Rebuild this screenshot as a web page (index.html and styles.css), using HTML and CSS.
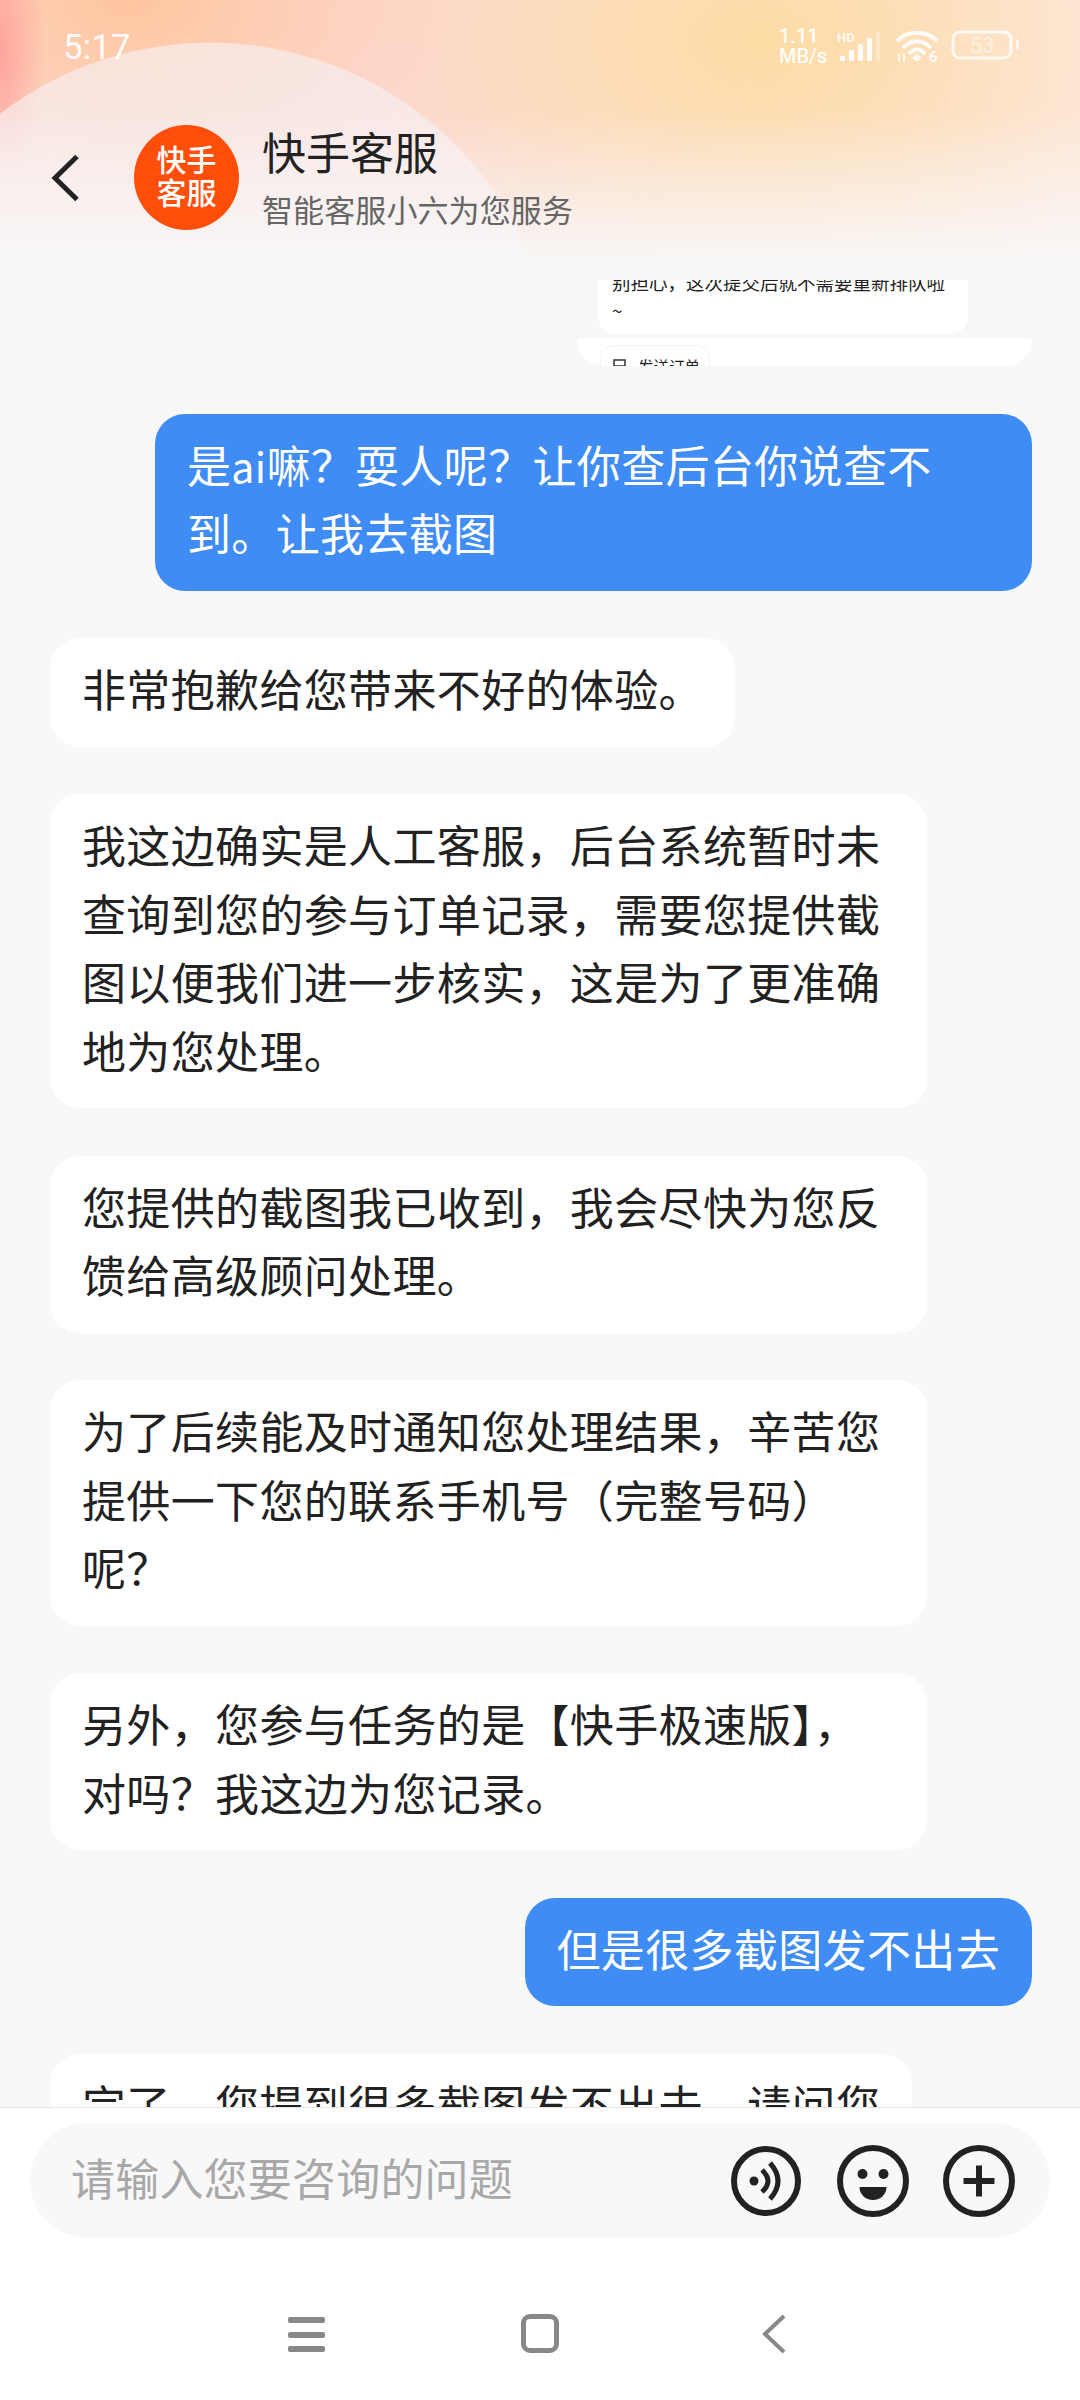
FILE: index.html
```html
<!DOCTYPE html>
<html lang="zh-CN">

<head>
    <meta charset="UTF-8">
    <meta name="viewport" content="width=device-width, initial-scale=1.0">
    <title>快手客服</title>
    <link rel="stylesheet" href="styles.css">
</head>

<body>
    <div class="phone">
        <header class="top">
            <div class="status">
                <span class="time">5:17</span>
                <div class="status-icons">
                    <span class="speed">1.11<br>MB/s</span>
                    <svg class="signal" width="52" height="32" viewBox="0 0 52 32">
                        <text class="hd" x="2" y="11">HD</text>
                        <rect class="bar" x="5" y="25" width="5" height="5" rx="1"/>
                        <rect class="bar" x="14" y="19" width="5" height="11" rx="1"/>
                        <rect class="bar" x="23" y="13" width="5" height="17" rx="1"/>
                        <rect class="bar" x="32" y="7" width="5" height="23" rx="1"/>
                        <rect class="bar dim" x="41" y="0" width="4" height="30" rx="1"/>
                    </svg>
                    <svg class="wifi" width="44" height="33" viewBox="0 0 44 33">
                        <path class="wave" d="M2 11 C12 0 32 0 42 11"/>
                        <path class="wave" d="M8 18 C16 9 28 9 36 18"/>
                        <path class="wave" d="M14 24 C19 18 25 18 30 24"/>
                        <path class="bar" d="M22 24 l5 4 -5 3.500 -5 -3.500z"/>
                        <path class="arrows" d="M4 32 v-8 M9 24 v8"/>
                        <text class="six" x="34" y="32">6</text>
                    </svg>
                    <svg class="battery" width="68" height="30" viewBox="0 0 68 30">
                        <rect class="shell" x="2" y="2" width="58" height="26" rx="7"/>
                        <text class="level" x="31" y="23">53</text>
                        <rect class="nub" x="65" y="10" width="3" height="10" rx="1.500"/>
                    </svg>
                </div>
            </div>
            <div class="title-bar">
                <svg class="back" width="30" height="50" viewBox="0 0 30 50">
                    <path d="M27 3.500 L5 25 L27 46.500"/>
                </svg>
                <div class="avatar">快手<br>客服</div>
                <div class="names">
                    <div class="name">快手客服</div>
                    <div class="sub">智能客服小六为您服务</div>
                </div>
            </div>
        </header>

        <main class="chat">
            <div class="quoted">
                <div class="quoted-msg">
                    <p>别担心，这次提交后就不需要重新排队啦<br>~</p>
                </div>
                <div class="quoted-actions">
                    <div class="chip">
                        <svg width="13" height="16" viewBox="0 0 13 16">
                            <path d="M1 1 H12 V15 H1z M1 7 H12"/>
                        </svg>
                        发送订单
                    </div>
                </div>
            </div>

            <div class="bubble me">是<span class="latin">ai</span>嘛？耍人呢？让你查后台你说查不到。让我去截图</div>
            <div class="bubble">非常抱歉给您带来不好的体验。</div>
            <div class="bubble">我这边确实是人工客服，后台系统暂时未查询到您的参与订单记录，需要您提供截图以便我们进一步核实，这是为了更准确地为您处理。</div>
            <div class="bubble">您提供的截图我已收到，我会尽快为您反馈给高级顾问处理。</div>
            <div class="bubble">为了后续能及时通知您处理结果，辛苦您提供一下您的联系手机号（完整号码）<br>呢？</div>
            <div class="bubble">另外，您参与任务的是【快手极速版】，对吗？我这边为您记录。</div>
            <div class="bubble me">但是很多截图发不出去</div>
            <div class="bubble">完了，您提到很多截图发不出去，请问您</div>
        </main>

        <footer class="bottom">
            <div class="input-bar">
                <span class="placeholder">请输入您要咨询的问题</span>
                <div class="tools">
                    <svg class="tool" width="72" height="72" viewBox="0 0 72 72">
                        <circle class="ring" cx="36" cy="36" r="32"/>
                        <circle class="solid" cx="24" cy="36" r="4.500"/>
                        <path class="ring thin" d="M32 25 Q44 36 32 47"/>
                        <path class="ring thin" d="M40 18 Q56 36 40 54"/>
                    </svg>
                    <svg class="tool" width="72" height="72" viewBox="0 0 72 72">
                        <circle class="ring" cx="36" cy="36" r="33"/>
                        <circle class="solid" cx="25.500" cy="29" r="5"/>
                        <circle class="solid" cx="46.500" cy="29" r="5"/>
                        <path class="solid" d="M22.500 42 h27 a13.500 13 0 0 1 -27 0z"/>
                    </svg>
                    <svg class="tool" width="72" height="72" viewBox="0 0 72 72">
                        <circle class="ring" cx="36" cy="36" r="33"/>
                        <path class="ring" d="M20.500 36 H51.500 M36 20.500 V51.500"/>
                    </svg>
                </div>
            </div>
            <nav class="nav">
                <div class="nav-btn">
                    <div class="menu-icon"><i></i><i></i><i></i></div>
                </div>
                <div class="nav-btn">
                    <div class="home-icon"></div>
                </div>
                <div class="nav-btn">
                    <svg class="nav-back" width="24" height="40" viewBox="0 0 24 40">
                        <path d="M22 2 L3 20 L22 38"/>
                    </svg>
                </div>
            </nav>
        </footer>
    </div>
</body>

</html>
```

FILE: styles.css
```css
html,
body {
    margin: 0;
    padding: 0;
    background: #f8f8f8;
    font-family: "Noto Sans CJK SC", "Noto Sans", sans-serif;
}

.phone {
    width: 1080px;
    height: 2400px;
    display: flex;
    flex-direction: column;
    overflow: hidden;
}

/* header */
.top {
    height: 280px;
    flex: none;
    background:
        linear-gradient(to bottom, rgba(248, 248, 248, 0) 110px, rgba(248, 248, 248, .55) 205px, #f8f8f8 268px),
        radial-gradient(circle 346px at 210px 388px, rgba(247, 241, 244, .64) 99.6%, rgba(247, 241, 244, 0) 100%),
        radial-gradient(ellipse 45px 140px at 0 50px, #ffa39c 0, rgba(255, 163, 156, 0) 100%),
        radial-gradient(ellipse 320px 200px at 130px 0, #ffc6a0 0, rgba(255, 198, 160, 0) 100%),
        radial-gradient(ellipse 400px 280px at 760px 40px, #fddca4 0, rgba(253, 220, 164, 0) 100%),
        linear-gradient(to right, #fcd9cf, #fcd8d0 40%, #fde8dd);
}

.status {
    height: 92px;
    padding: 0 61px 0 63px;
    display: flex;
    justify-content: space-between;
    align-items: flex-start;
    color: rgba(255, 255, 255, .95);
}

.time {
    margin-top: 24px;
    font-family: Roboto, sans-serif;
    font-size: 35px;
    line-height: 48px;
}

.status-icons {
    margin-top: 26px;
    display: flex;
    align-items: flex-start;
    font-family: Roboto, sans-serif;
}

.speed {
    width: 56px;
    font-size: 20px;
    font-weight: 500;
    line-height: 20px;
    text-align: left;
}

.signal {
    margin-top: 5px;
}

.wifi {
    margin: 4px 0 0 8px;
}

.battery {
    margin: 4px 0 0 12px;
}

.hd {
    font-size: 13px;
    font-weight: 700;
    fill: rgba(255, 255, 255, .85);
}

.bar {
    fill: rgba(255, 255, 255, .88);
}

.bar.dim {
    fill: rgba(255, 255, 255, .3);
}

.wave {
    fill: none;
    stroke: rgba(255, 255, 255, .88);
    stroke-width: 4;
}

.arrows {
    fill: none;
    stroke: rgba(255, 255, 255, .75);
    stroke-width: 2;
}

.six {
    font-size: 15px;
    font-weight: 700;
    fill: rgba(255, 255, 255, .88);
}

.shell {
    fill: none;
    stroke: rgba(255, 255, 255, .8);
    stroke-width: 3;
}

.level {
    font-size: 22px;
    text-anchor: middle;
    fill: rgba(255, 255, 255, .55);
}

.nub {
    fill: rgba(255, 255, 255, .7);
}

.title-bar {
    display: flex;
    align-items: center;
    padding: 31px 0 0 50px;
}

.back {
    flex: none;
}

.back path,
.nav-back path {
    fill: none;
    stroke: #222;
    stroke-width: 5;
}

.avatar {
    flex: none;
    width: 105px;
    height: 105px;
    margin-left: 54px;
    padding-bottom: 5px;
    box-sizing: border-box;
    border-radius: 50%;
    background: #ff4e0a;
    color: #fff;
    font-size: 30px;
    font-weight: 500;
    line-height: 33px;
    text-align: center;
    display: flex;
    align-items: center;
    justify-content: center;
}

.names {
    margin-left: 23px;
    padding-bottom: 1px;
}

.name {
    font-size: 44px;
    line-height: 56px;
    color: #222;
}

.sub {
    font-size: 31px;
    letter-spacing: .1px;
    line-height: 44px;
    margin-top: 8px;
    color: #666;
}

/* messages */
.chat {
    flex: 1;
    min-height: 0;
    overflow: hidden;
    padding: 0 48px 0 50px;
    display: flex;
    flex-direction: column;
    gap: 47.500px;
}

.quoted {
    flex: none;
    align-self: flex-end;
    width: 455px;
    height: 86px;
    display: flex;
    flex-direction: column;
    gap: 5px;
}

.quoted-msg {
    flex: none;
    height: 54px;
    width: 370px;
    margin-left: 21px;
    overflow: hidden;
    background: #fff;
    border-radius: 0 0 18px 18px;
}

.quoted-msg p {
    margin: -12px 0 0;
    padding: 0 14px;
    font-size: 18.500px;
    line-height: 28px;
    color: #222;
}

.quoted-actions {
    flex: 1;
    overflow: hidden;
    background: #fff;
    border-radius: 0 0 30px 30px;
}

.chip {
    width: 110px;
    height: 40px;
    margin: 6px 0 0 23px;
    box-sizing: border-box;
    border: 1px solid #f3f3f3;
    border-radius: 14px;
    padding: 10px 0 0 12px;
    display: flex;
    gap: 12px;
    font-size: 15.500px;
    line-height: 20px;
    color: #222;
}

.chip svg {
    margin-top: 3px;
    fill: none;
    stroke: #333;
    stroke-width: 1.500;
}

.bubble {
    flex: none;
    align-self: flex-start;
    max-width: 813px;
    padding: 16px 32px 24px;
    background: #fff;
    border-radius: 30px;
    font-size: 44px;
    letter-spacing: .35px;
    line-height: 68.500px;
    color: #222;
}

.bubble.me {
    align-self: flex-end;
    background: #3f8cf4;
    color: #fff;
}

.latin {
    font-size: 41px;
    line-height: 1;
}

/* input + nav */
.bottom {
    height: 293px;
    flex: none;
    box-sizing: border-box;
    border-top: 1px solid #e6e6e6;
    background: #fff;
    padding-top: 15px;
}

.input-bar {
    height: 115px;
    margin: 0 30px;
    padding: 0 35px 0 41px;
    border-radius: 58px;
    background: #f8f8f8;
    display: flex;
    align-items: center;
    justify-content: space-between;
}

.placeholder {
    padding-bottom: 8px;
    font-size: 44px;
    letter-spacing: .2px;
    color: #a8a8a8;
}

.tools {
    display: flex;
    gap: 34.500px;
}

.tool {
    display: block;
}

.ring {
    fill: none;
    stroke: #222;
    stroke-width: 6;
}

.ring.thin {
    stroke-width: 5;
}

.solid {
    fill: #222;
}

.nav {
    margin-top: 76px;
    display: flex;
    justify-content: center;
}

.nav-btn {
    width: 234px;
    height: 40px;
    display: flex;
    justify-content: center;
}

.menu-icon {
    width: 37px;
    padding-top: 3px;
}

.menu-icon i {
    display: block;
    height: 6px;
    margin-bottom: 8.500px;
    border-radius: 2px;
    background: #888;
}

.home-icon {
    width: 38px;
    height: 39px;
    box-sizing: border-box;
    border: 5px solid #888;
    border-radius: 9px;
}

.nav .nav-back path {
    stroke: #888;
    stroke-width: 4;
}
```
